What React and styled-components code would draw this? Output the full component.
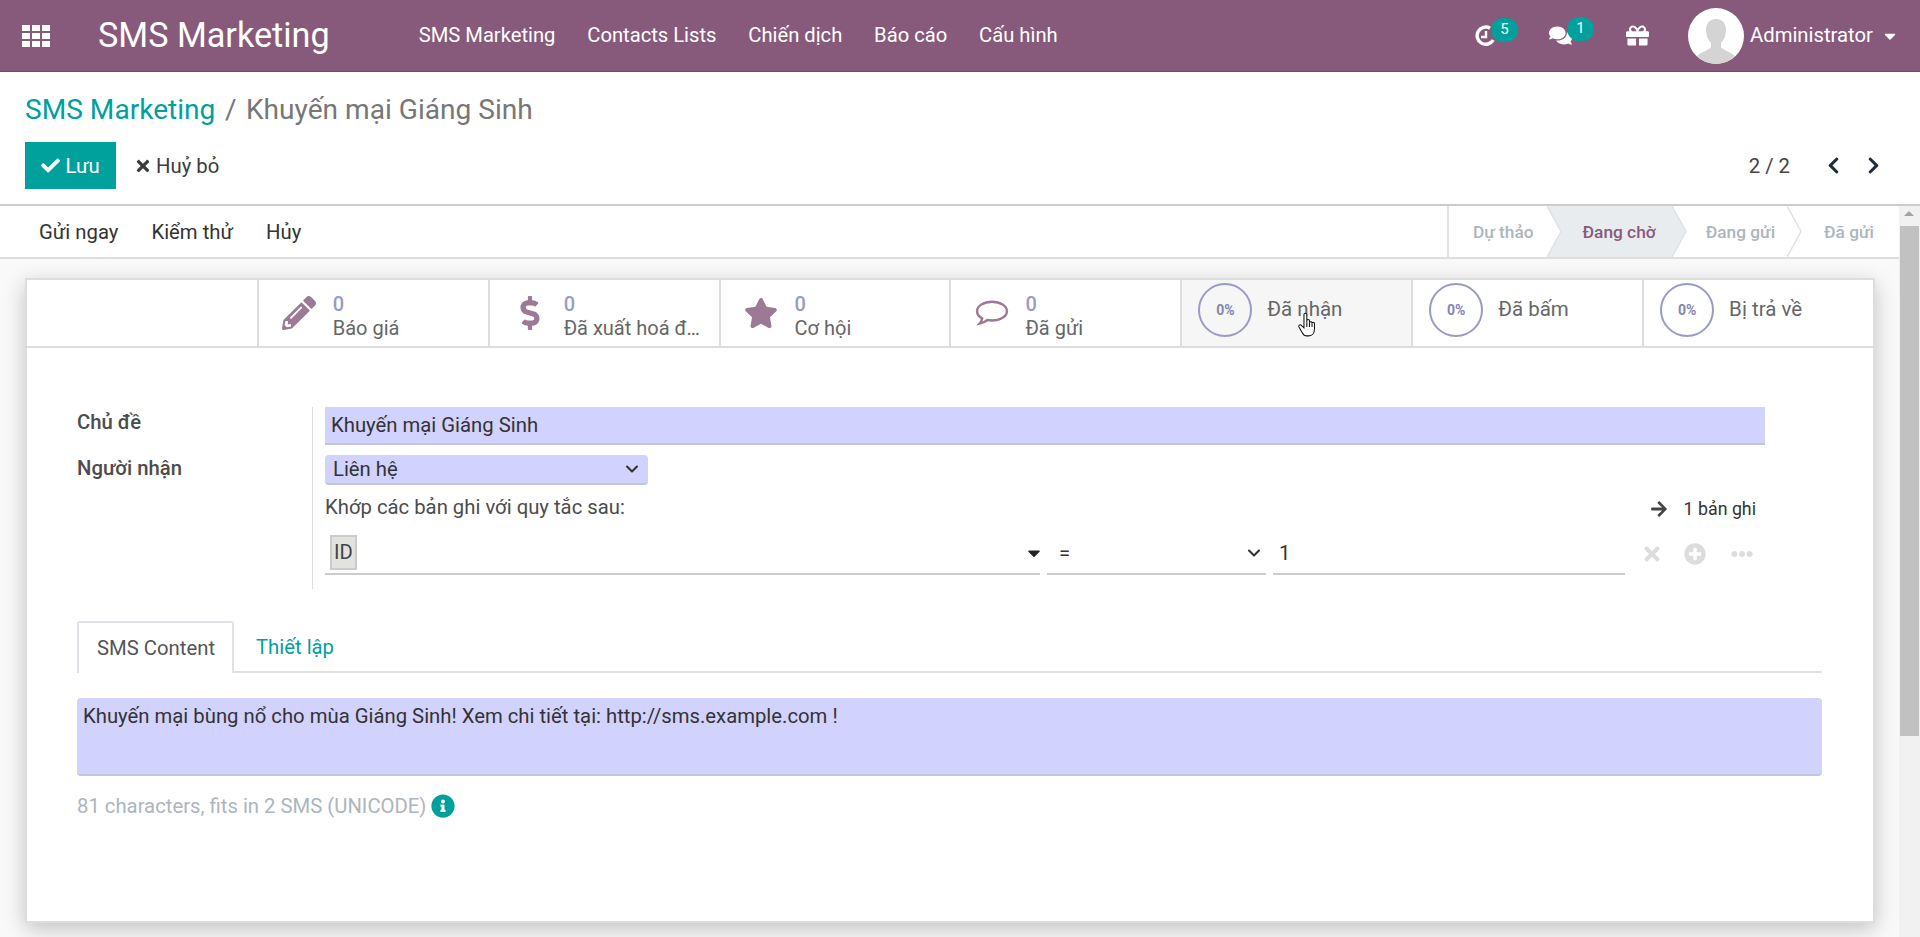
import React from "react";
import styled, { createGlobalStyle } from "styled-components";
import {
  FaGift,
  FaComments,
  FaCheck,
  FaTimes,
  FaChevronLeft,
  FaChevronRight,
  FaPencilAlt,
  FaDollarSign,
  FaStar,
  FaArrowRight,
  FaPlusCircle,
  FaEllipsisH,
  FaInfoCircle,
  FaCaretDown,
} from "react-icons/fa";
import { LuChevronDown } from "react-icons/lu";

const GlobalStyle = createGlobalStyle`
  html, body {
    margin: 0;
    height: 100%;
    overflow: hidden;
  }
  body {
    font-family: Roboto, "Noto Sans", sans-serif;
    font-size: 20.3px;
    color: #4c4c4c;
    background: #fff;
  }
`;

const Page = styled.div`
  display: flex;
  flex-direction: column;
  height: 937px;
`;

const Navbar = styled.header`
  display: flex;
  align-items: center;
  flex: none;
  height: 71px;
  padding: 0 21px 0 22px;
  background: #875a7b;
  border-bottom: 1px solid #6f4a65;
  color: #fff;
`;

const Apps = styled.svg`
  flex: none;
  width: 28px;
  height: 22px;
  fill: #fff;
`;

const Brand = styled.div`
  margin-left: 48px;
  font-size: 34.2px;
  line-height: 1;
`;

const Menu = styled.nav`
  display: flex;
  gap: 31.8px;
  margin-left: 89px;
  padding-bottom: 2px;
  font-size: 20.2px;
`;

const Systray = styled.div`
  display: flex;
  align-items: center;
  margin-left: auto;
`;

const TrayItem = styled.div`
  position: relative;
  display: flex;
  width: ${(p) => p.$w}px;
  font-size: 23px;
`;

const Badge = styled.span`
  position: absolute;
  left: ${(p) => p.$left}px;
  top: -7px;
  width: 27px;
  height: 24px;
  border-radius: 12px;
  background: #00a09d;
  font-size: 15px;
  line-height: 22px;
  text-align: center;
`;

const Avatar = styled.svg`
  width: 56px;
  height: 56px;
  border-radius: 50%;
  background: #fff;
`;

const UserName = styled.span`
  margin-left: 6px;
  margin-right: 8px;
  padding-bottom: 2px;
`;

const ControlPanel = styled.section`
  flex: none;
  height: 134px;
  box-sizing: border-box;
  padding: 19px 25px 0;
  background: #fff;
  border-bottom: 2px solid #ccc;
`;

const Breadcrumb = styled.div`
  display: flex;
  align-items: center;
  gap: 9.5px;
  height: 36px;
  font-size: 28.1px;
  color: #777;
`;

const Crumb = styled.span`
  color: #00a09d;
`;

const ButtonRow = styled.div`
  display: flex;
  align-items: center;
  margin-top: 15px;
  height: 47px;
`;

const SaveButton = styled.button`
  display: flex;
  align-items: center;
  justify-content: center;
  gap: 5px;
  width: 91px;
  height: 47px;
  padding: 0;
  border: 0;
  background: #00a09d;
  color: #fff;
  font: inherit;
`;

const DiscardButton = styled.button`
  display: flex;
  align-items: center;
  gap: 4px;
  margin-left: 18px;
  padding: 0;
  border: 0;
  background: none;
  color: #3c3c3c;
  font: inherit;
`;

const Pager = styled.div`
  display: flex;
  align-items: center;
  margin-left: auto;
  padding-right: 12px;
  color: #444;
`;

const PagerArrows = styled.div`
  display: flex;
  gap: 21px;
  margin-left: 34px;
  color: #1f2d3a;
  font-size: 19px;
`;

const Main = styled.div`
  display: flex;
  flex: 1;
  min-height: 0;
`;

const Content = styled.main`
  flex: 1;
  min-width: 0;
  background: #f9f9f9;
`;

const Scrollbar = styled.div`
  position: relative;
  flex: none;
  width: 21px;
  background: #f1f1f1;
`;

const ScrollArrow = styled.div`
  position: absolute;
  left: 5px;
  top: 5px;
  width: 0;
  height: 0;
  border-left: 5px solid transparent;
  border-right: 5px solid transparent;
  border-bottom: 5px solid #a3a3a3;
`;

const ScrollThumb = styled.div`
  margin: 20px 1px 0 1px;
  height: 510px;
  background: #c1c1c1;
`;

const StatusBar = styled.div`
  display: flex;
  align-items: stretch;
  justify-content: space-between;
  height: 51px;
  background: #fff;
  border-bottom: 2px solid #ddd;
`;

const Actions = styled.div`
  display: flex;
  align-items: center;
  gap: 33px;
  padding-left: 39px;
  color: #333;
`;

const Steps = styled.div`
  display: flex;
  border-left: 2px solid #dee2e6;
`;

const Step = styled.div`
  position: relative;
  display: flex;
  align-items: center;
  padding: 0 ${(p) => p.$right}px 0 ${(p) => p.$left}px;
  background: ${(p) => (p.$active ? "#e9ecef" : "#fff")};
  color: ${(p) => (p.$active ? "#875a7b" : "#adb5bd")};
  font-size: 17.3px;
  font-weight: 500;
`;

const StepTip = styled.svg`
  position: absolute;
  left: 100%;
  top: 0;
  z-index: 1;
  width: 15px;
  height: 51px;
`;

const Sheet = styled.div`
  display: flex;
  flex-direction: column;
  box-sizing: border-box;
  height: 645px;
  margin: 19px 24px 0 25px;
  background: #fff;
  border: 2px solid #ddd;
  box-shadow: 0 6px 20px rgba(0, 0, 0, 0.22);
`;

const ButtonBox = styled.div`
  display: flex;
  justify-content: flex-end;
  flex: none;
  height: 66px;
  border-bottom: 2px solid #ddd;
`;

const StatButton = styled.div`
  position: relative;
  display: flex;
  align-items: center;
  width: 230.9px;
  box-sizing: border-box;
  border-left: 2px solid #ddd;
  background: ${(p) => (p.$hover ? "#f6f6f6" : "#fff")};
`;

const StatIcon = styled.span`
  display: flex;
  justify-content: center;
  flex: none;
  box-sizing: border-box;
  width: 74px;
  padding-left: 7px;
  color: #9c7a95;
  font-size: 34px;
`;

const StatText = styled.div`
  display: flex;
  flex-direction: column;
  min-width: 0;
  padding-top: 5px;
  line-height: 24px;
  font-size: 20px;
  color: #666;
`;

const StatValue = styled.span`
  color: #9a9ac6;
  font-weight: 500;
`;

const StatLabel = styled.span`
  white-space: nowrap;
  overflow: hidden;
  text-overflow: ellipsis;
  max-width: 140px;
`;

const Ring = styled.div`
  display: flex;
  align-items: center;
  justify-content: center;
  flex: none;
  width: 54px;
  height: 54px;
  box-sizing: border-box;
  margin: 0 15px 7px 16px;
  border: 2px solid #9a9ac6;
  border-radius: 50%;
  color: #8484b4;
  font-size: 14px;
  font-weight: 700;
`;

const RingLabel = styled.span`
  margin-bottom: 9px;
  font-size: 20.5px;
  color: #666;
`;

const Pointer = styled.svg`
  position: absolute;
  left: 116px;
  top: 32px;
  width: 18px;
  height: 26px;
`;

const SheetBody = styled.div`
  padding: 59px 51px 0 50px;
`;

const FormGrid = styled.div`
  display: grid;
  grid-template-columns: 235px 1px 1fr;
  margin-right: 57px;
`;

const Labels = styled.div`
  display: flex;
  flex-direction: column;
  gap: 20px;
  padding-top: 2px;
`;

const FieldLabel = styled.label`
  font-weight: 500;
  line-height: 26px;
  color: #4c4c4c;
`;

const Separator = styled.div`
  background: #ddd;
`;

const Fields = styled.div`
  display: flex;
  flex-direction: column;
  padding: 0 0 14px 12px;
`;

const TitleInput = styled.div`
  display: flex;
  align-items: center;
  height: 38px;
  box-sizing: border-box;
  padding-left: 6px;
  background: #d2d2ff;
  border-bottom: 2px solid #c4c4d4;
  color: #333;
`;

const RecipientSelect = styled.div`
  display: flex;
  align-items: center;
  justify-content: space-between;
  box-sizing: border-box;
  width: 323px;
  height: 30px;
  margin-top: 10px;
  padding: 0 6px 0 8px;
  background: #d2d2ff;
  border-radius: 4px;
  border-bottom: 2px solid #c4c4d4;
  color: #333;
`;

const DomainHead = styled.div`
  display: flex;
  align-items: center;
  justify-content: space-between;
  height: 47px;
  padding-right: 9px;
`;

const RuleHint = styled.span`
  margin-bottom: 3px;
`;

const RecordCount = styled.div`
  display: flex;
  align-items: center;
  gap: 16px;
  font-size: 17.8px;
  color: #333;
`;

const DomainRow = styled.div`
  display: flex;
  align-items: center;
  gap: 7px;
  height: 43px;
`;

const DomainField = styled.div`
  display: flex;
  align-items: center;
  justify-content: space-between;
  box-sizing: border-box;
  width: ${(p) => p.$w}px;
  height: 43px;
  padding: 0 2px 0 ${(p) => p.$pad}px;
  border-bottom: 2px solid #ccc;
  color: #333;
`;

const Tag = styled.span`
  padding: 0 2px;
  height: 31px;
  line-height: 31px;
  background: #e2e2de;
  border: 2px solid #ccc;
  color: #444;
`;

const FieldCaret = styled(FaCaretDown)`
  font-size: 20px;
  color: #222;
  margin-right: -6px;
`;

const RowIcons = styled.div`
  display: grid;
  grid-template-columns: 43px 47px 22px;
  justify-items: start;
  margin-left: 9px;
  color: #dcdcdc;
  font-size: 22px;
`;

const Tabs = styled.div`
  display: flex;
  height: 50px;
  margin-top: 32px;
  border-bottom: 2px solid #dee2e6;
`;

const Tab = styled.div`
  display: flex;
  align-items: center;
  box-sizing: border-box;
  height: 52px;
  padding: ${(p) => (p.$active ? "0 17px 0 18px" : "0 22px")};
  color: ${(p) => (p.$active ? "#555" : "#00a09d")};
  background: ${(p) => (p.$active ? "#fff" : "none")};
  ${(p) =>
    p.$active &&
    "border: 2px solid #dee2e6; border-bottom: 0; border-radius: 3px 3px 0 0;"}
`;

const MessageBox = styled.div`
  box-sizing: border-box;
  height: 78px;
  margin-top: 25px;
  padding: 6px;
  background: #d2d2ff;
  border-radius: 4px;
  border-bottom: 2px solid #c4c4d4;
  color: #333;
`;

const Caption = styled.div`
  display: flex;
  align-items: center;
  gap: 5px;
  margin-top: 18px;
  color: #adb5bd;
`;

const InfoIcon = styled(FaInfoCircle)`
  width: 24px;
  height: 24px;
  color: #00a09d;
`;

const BubbleIcon = styled.svg`
  width: 34px;
  height: 28px;
  fill: none;
  stroke: #9c7a95;
  stroke-width: 2.6;
`;

function CommentIcon() {
  return (
    <BubbleIcon viewBox="0 0 36 30">
      <path d="M18 3C9 3 2 7.500 2 13c0 3.200 2.200 5.900 5.500 7.800-.3 2.200-1.300 4-2.800 5.600 3.300-.6 6.300-2.100 8.400-3.900 1.600.3 3.200.5 4.900.5 9 0 16-4.500 16-10S27 3 18 3z" />
    </BubbleIcon>
  );
}

const stats = [
  { icon: <FaPencilAlt />, label: "Báo giá" },
  { icon: <FaDollarSign />, label: "Đã xuất hoá đơn" },
  { icon: <FaStar />, label: "Cơ hội" },
  { icon: <CommentIcon />, label: "Đã gửi" },
];

const rates = [
  { label: "Đã nhận", hover: true },
  { label: "Đã bấm" },
  { label: "Bị trả về" },
];

const steps = [
  { name: "Dự thảo", left: 24, right: 13 },
  { name: "Đang chờ", left: 36, right: 16, active: true },
  { name: "Đang gửi", left: 34, right: 12 },
  { name: "Đã gửi", left: 37, right: 25, last: true },
];

function AppsIcon() {
  const cells = [0, 10, 20].flatMap((x) =>
    [0, 8, 16].map((y) => <rect key={`${x}-${y}`} x={x} y={y} width="8" height="6" />)
  );
  return <Apps viewBox="0 0 28 22">{cells}</Apps>;
}

function ActivityIcon() {
  return (
    <svg width="21" height="22" viewBox="0 0 21 22" fill="none" stroke="#fff">
      <path d="M15 3.2A8.6 8.6 0 1 0 18.2 15" strokeWidth="3.4" />
      <path d="M11 6v6H6" strokeWidth="2.4" />
    </svg>
  );
}

function HandCursor() {
  return (
    <Pointer viewBox="0 0 19 26" fill="#fff" stroke="#111" strokeWidth="1.1">
      <path d="M6.3 2a1.5 1.5 0 0 1 3 0v8V8.5a1.4 1.4 0 0 1 2.8 0v2a1.4 1.4 0 0 1 2.7 0v1a1.3 1.3 0 0 1 2.6 0v5.5c0 4.500-2.400 7.500-6 7.500h-2c-2.500 0-3.900-1.400-4.900-3.400L1 15c-.7-1.600 1.100-3 2.500-1.700l2.800 2.700z" />
      <path d="M9.300 10v5M12.100 10.500v4.500M14.800 11.500V15" fill="none" />
    </Pointer>
  );
}

export default function App() {
  return (
    <>
      <GlobalStyle />
      <Page>
        <Navbar>
          <AppsIcon />
          <Brand>SMS Marketing</Brand>
          <Menu>
            <span>SMS Marketing</span>
            <span>Contacts Lists</span>
            <span>Chiến dịch</span>
            <span>Báo cáo</span>
            <span>Cấu hình</span>
          </Menu>
          <Systray>
            <TrayItem $w={74}>
              <ActivityIcon />
              <Badge $left={16}>5</Badge>
            </TrayItem>
            <TrayItem $w={77}>
              <FaComments />
              <Badge $left={18}>1</Badge>
            </TrayItem>
            <TrayItem $w={62}>
              <FaGift />
            </TrayItem>
            <Avatar viewBox="0 0 56 56">
              <path
                fill="#d4d4d4"
                d="M28 11c-7 0-10 5-10 11 0 5 2 10 5 13v4c-3 4-12 5-15 11 5 4 12 6 20 6s15-2 20-6c-3-6-12-7-15-11v-4c3-3 5-8 5-13 0-6-3-11-10-11z"
              />
            </Avatar>
            <UserName>Administrator</UserName>
            <FaCaretDown size={18} />
          </Systray>
        </Navbar>
        <ControlPanel>
          <Breadcrumb>
            <Crumb>SMS Marketing</Crumb>
            <span>/</span>
            <span>Khuyến mại Giáng Sinh</span>
          </Breadcrumb>
          <ButtonRow>
            <SaveButton>
              <FaCheck size={19} />
              Lưu
            </SaveButton>
            <DiscardButton>
              <FaTimes size={18} />
              Huỷ bỏ
            </DiscardButton>
            <Pager>
              2 / 2
              <PagerArrows>
                <FaChevronLeft />
                <FaChevronRight />
              </PagerArrows>
            </Pager>
          </ButtonRow>
        </ControlPanel>
        <Main>
          <Content>
            <StatusBar>
              <Actions>
                <span>Gửi ngay</span>
                <span>Kiểm thử</span>
                <span>Hủy</span>
              </Actions>
              <Steps>
                {steps.map((s) => (
                  <Step
                    key={s.name}
                    $left={s.left}
                    $right={s.right}
                    $active={s.active}
                  >
                    {s.name}
                    {!s.last && (
                      <StepTip viewBox="0 0 15 51">
                        <path
                          d="M0 0L14 25.5L0 51Z"
                          fill={s.active ? "#e9ecef" : "#fff"}
                        />
                        <path
                          d="M0 0L14 25.5L0 51"
                          fill="none"
                          stroke="#dee2e6"
                          strokeWidth="1.5"
                        />
                      </StepTip>
                    )}
                  </Step>
                ))}
              </Steps>
            </StatusBar>
            <Sheet>
              <ButtonBox>
                {stats.map((s) => (
                  <StatButton key={s.label}>
                    <StatIcon>{s.icon}</StatIcon>
                    <StatText>
                      <StatValue>0</StatValue>
                      <StatLabel>{s.label}</StatLabel>
                    </StatText>
                  </StatButton>
                ))}
                {rates.map((r) => (
                  <StatButton key={r.label} $hover={r.hover}>
                    <Ring>0%</Ring>
                    <RingLabel>{r.label}</RingLabel>
                    {r.hover && <HandCursor />}
                  </StatButton>
                ))}
              </ButtonBox>
              <SheetBody>
                <FormGrid>
                  <Labels>
                    <FieldLabel>Chủ đề</FieldLabel>
                    <FieldLabel>Người nhận</FieldLabel>
                  </Labels>
                  <Separator />
                  <Fields>
                    <TitleInput>Khuyến mại Giáng Sinh</TitleInput>
                    <RecipientSelect>
                      Liên hệ
                      <LuChevronDown size={20} strokeWidth={2.5} />
                    </RecipientSelect>
                    <DomainHead>
                      <RuleHint>Khớp các bản ghi với quy tắc sau:</RuleHint>
                      <RecordCount>
                        <FaArrowRight size={18} color="#444" />1 bản ghi
                      </RecordCount>
                    </DomainHead>
                    <DomainRow>
                      <DomainField $w={715} $pad={5}>
                        <Tag>ID</Tag>
                        <FieldCaret />
                      </DomainField>
                      <DomainField $w={219} $pad={12}>
                        =
                        <LuChevronDown size={20} strokeWidth={2.5} />
                      </DomainField>
                      <DomainField $w={352} $pad={6}>
                        1
                      </DomainField>
                      <RowIcons>
                        <FaTimes />
                        <FaPlusCircle />
                        <FaEllipsisH />
                      </RowIcons>
                    </DomainRow>
                  </Fields>
                </FormGrid>
                <Tabs>
                  <Tab $active>SMS Content</Tab>
                  <Tab>Thiết lập</Tab>
                </Tabs>
                <MessageBox>
                  Khuyến mại bùng nổ cho mùa Giáng Sinh! Xem chi tiết tại:
                  http://sms.example.com !
                </MessageBox>
                <Caption>
                  81 characters, fits in 2 SMS (UNICODE)
                  <InfoIcon />
                </Caption>
              </SheetBody>
            </Sheet>
          </Content>
          <Scrollbar>
            <ScrollArrow />
            <ScrollThumb />
          </Scrollbar>
        </Main>
      </Page>
    </>
  );
}
